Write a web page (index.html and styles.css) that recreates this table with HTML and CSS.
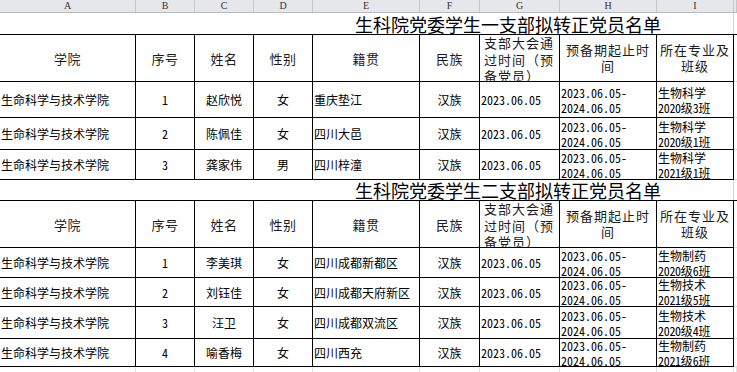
FILE: index.html
```html
<!DOCTYPE html>
<html lang="zh-CN">
<head>
<meta charset="utf-8">
<title>生科院党委学生支部拟转正党员名单</title>
<link rel="stylesheet" href="styles.css">
</head>
<body>
<div class="sheet">
  <div class="colbar">
    <div class="ch">A</div><div class="ch">B</div><div class="ch">C</div><div class="ch">D</div><div class="ch">E</div><div class="ch">F</div><div class="ch">G</div><div class="ch">H</div><div class="ch">I</div><div class="ch"></div>
  </div>

  <div class="title t1">生科院党委学生一支部拟转正党员名单</div>
  <div class="table">
    <div class="row head">
      <div class="c ctr hd">学院</div>
      <div class="c ctr hd">序号</div>
      <div class="c ctr hd">姓名</div>
      <div class="c ctr hd">性别</div>
      <div class="c ctr hd">籍贯</div>
      <div class="c ctr hd">民族</div>
      <div class="c top hd wrapg"><div>支部大会通过时间（预备党员）</div></div>
      <div class="c ctr hd wrapc"><div>预备期起止时间</div></div>
      <div class="c ctr hd wrapc wrapi"><div>所在专业及班级</div></div>
      <div class="c x"></div>
    </div>
    <div class="row h36">
      <div class="c">生命科学与技术学院</div><div class="c ctr num">1</div><div class="c ctr">赵欣悦</div><div class="c ctr">女</div><div class="c">重庆垫江</div><div class="c ctr">汉族</div><div class="c num">2023.06.05</div>
      <div class="c two"><div><span class="num">2023.06.05-</span><span class="num">2024.06.05</span></div></div>
      <div class="c two"><div><span>生物科学</span><span><i class="num">2020</i>级<i class="num">3</i>班</span></div></div><div class="c x"></div>
    </div>
    <div class="row h32">
      <div class="c">生命科学与技术学院</div><div class="c ctr num">2</div><div class="c ctr">陈佩佳</div><div class="c ctr">女</div><div class="c">四川大邑</div><div class="c ctr">汉族</div><div class="c num">2023.06.05</div>
      <div class="c two"><div><span class="num">2023.06.05-</span><span class="num">2024.06.05</span></div></div>
      <div class="c two"><div><span>生物科学</span><span><i class="num">2020</i>级<i class="num">1</i>班</span></div></div><div class="c x"></div>
    </div>
    <div class="row h30">
      <div class="c">生命科学与技术学院</div><div class="c ctr num">3</div><div class="c ctr">龚家伟</div><div class="c ctr">男</div><div class="c">四川梓潼</div><div class="c ctr">汉族</div><div class="c num">2023.06.05</div>
      <div class="c two"><div><span class="num">2023.06.05-</span><span class="num">2024.06.05</span></div></div>
      <div class="c two"><div><span>生物科学</span><span><i class="num">2021</i>级<i class="num">1</i>班</span></div></div><div class="c x"></div>
    </div>
  </div>

  <div class="title t2">生科院党委学生二支部拟转正党员名单</div>
  <div class="table">
    <div class="row head">
      <div class="c ctr hd">学院</div>
      <div class="c ctr hd">序号</div>
      <div class="c ctr hd">姓名</div>
      <div class="c ctr hd">性别</div>
      <div class="c ctr hd">籍贯</div>
      <div class="c ctr hd">民族</div>
      <div class="c top hd wrapg"><div>支部大会通过时间（预备党员）</div></div>
      <div class="c ctr hd wrapc"><div>预备期起止时间</div></div>
      <div class="c ctr hd wrapc wrapi"><div>所在专业及班级</div></div>
      <div class="c x"></div>
    </div>
    <div class="row h30">
      <div class="c">生命科学与技术学院</div><div class="c ctr num">1</div><div class="c ctr">李美琪</div><div class="c ctr">女</div><div class="c">四川成都新都区</div><div class="c ctr">汉族</div><div class="c num">2023.06.05</div>
      <div class="c two"><div><span class="num">2023.06.05-</span><span class="num">2024.06.05</span></div></div>
      <div class="c two"><div><span>生物制药</span><span><i class="num">2020</i>级<i class="num">6</i>班</span></div></div><div class="c x"></div>
    </div>
    <div class="row h29">
      <div class="c">生命科学与技术学院</div><div class="c ctr num">2</div><div class="c ctr">刘钰佳</div><div class="c ctr">女</div><div class="c">四川成都天府新区</div><div class="c ctr">汉族</div><div class="c num">2023.06.05</div>
      <div class="c two"><div><span class="num">2023.06.05-</span><span class="num">2024.06.05</span></div></div>
      <div class="c two"><div><span>生物技术</span><span><i class="num">2021</i>级<i class="num">5</i>班</span></div></div><div class="c x"></div>
    </div>
    <div class="row h32">
      <div class="c">生命科学与技术学院</div><div class="c ctr num">3</div><div class="c ctr">汪卫</div><div class="c ctr">女</div><div class="c">四川成都双流区</div><div class="c ctr">汉族</div><div class="c num">2023.06.05</div>
      <div class="c two"><div><span class="num">2023.06.05-</span><span class="num">2024.06.05</span></div></div>
      <div class="c two"><div><span>生物技术</span><span><i class="num">2020</i>级<i class="num">4</i>班</span></div></div><div class="c x"></div>
    </div>
    <div class="row h28">
      <div class="c">生命科学与技术学院</div><div class="c ctr num">4</div><div class="c ctr">喻香梅</div><div class="c ctr">女</div><div class="c">四川西充</div><div class="c ctr">汉族</div><div class="c num">2023.06.05</div>
      <div class="c two"><div><span class="num">2023.06.05-</span><span class="num">2024.06.05</span></div></div>
      <div class="c two"><div><span>生物制药</span><span><i class="num">2021</i>级<i class="num">6</i>班</span></div></div><div class="c x"></div>
    </div>
    <div class="row rest">
      <div class="g"></div><div class="g"></div><div class="g"></div><div class="g"></div><div class="g"></div><div class="g"></div><div class="g"></div><div class="g"></div><div class="g"></div><div class="g"></div>
    </div>
  </div>
</div>
</body>
</html>
```

FILE: styles.css
```css
html, body {
  margin: 0;
  padding: 0;
  background: #ffffff;
}

.sheet {
  width: 737px;
  height: 372px;
  overflow: hidden;
  font-family: "Noto Sans CJK SC", "Noto Sans", sans-serif;
  font-size: 12px;
  color: #000;
}

.colbar,
.row {
  display: grid;
  grid-template-columns: 136px 59px 59px 59px 107px 60px 80px 97px 77px 1fr;
}

.colbar {
  height: 13px;
  background: #e6e7ea;
  border-bottom: 1px solid #b9bbbf;
  box-sizing: border-box;
}

.ch {
  border-right: 1px solid #c4c6ca;
  font-family: "Liberation Serif", serif;
  font-size: 10px;
  line-height: 12px;
  text-align: center;
  color: #333;
}

.title {
  width: 733px;
  border-right: 1px solid #d6d6d6;
  box-sizing: content-box;
  padding-left: 0;
  font-size: 18px;
  color: #000;
  white-space: nowrap;
  overflow: hidden;
  text-indent: 355px;
}

.t1 {
  height: 21px;
  line-height: 22px;
}

.t2 {
  height: 20px;
  line-height: 20px;
}

.table {
  border-top: 1px solid #000;
}

.c {
  border-right: 1px solid #000;
  border-bottom: 1px solid #000;
  overflow: hidden;
  display: flex;
  align-items: center;
  padding-left: 1px;
  white-space: nowrap;
  line-height: 15px;
}

.c.x {
  border-right: none;
  border-bottom-color: #d8d8d8;
}

.ctr {
  justify-content: center;
  padding-left: 0;
}

.top {
  align-items: flex-start;
}

.num {
  font-family: "Noto Sans Mono CJK SC", "Liberation Mono", monospace;
  font-style: normal;
}

.c.num {
  font-size: 12px;
}

i.num {
  font-size: 12px;
  letter-spacing: -0.3px;
}

.two > div {
  display: flex;
  flex-direction: column;
}

.two span {
  display: block;
  line-height: 15px;
}

.head {
  height: 47px;
}

.hd {
  font-size: 13px;
  letter-spacing: 0.5px;
  color: #1c1c1c;
}

.wrapg > div {
  white-space: normal;
  width: 70px;
  padding-left: 3px;
  line-height: 16.5px;
  letter-spacing: 1px;
}

.wrapc > div {
  white-space: normal;
  width: 86px;
  text-align: center;
  line-height: 16px;
  letter-spacing: 1px;
}

.wrapi > div {
  width: 70px;
}

.h36 { height: 36px; }
.h32 { height: 32px; }
.h30 { height: 30px; }
.h29 { height: 29px; }
.h28 { height: 28px; }

.rest {
  height: 10px;
}

.g {
  border-right: 1px solid #e2e2e2;
}
```
